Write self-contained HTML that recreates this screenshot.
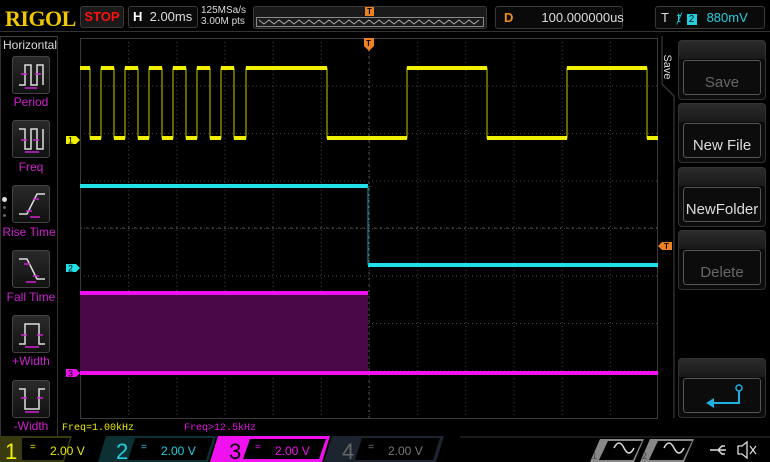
<!DOCTYPE html>
<html><head><meta charset="utf-8"><style>
*{margin:0;padding:0;box-sizing:border-box}
body{width:770px;height:462px;background:#000;position:relative;overflow:hidden;font-family:"Liberation Sans",sans-serif}
.a{position:absolute}
.box{position:absolute;border:1px solid #3a3a3a;border-radius:3px;background:#0a0a0a}
.lb{position:absolute;width:62px;left:0;text-align:center;color:#d020d0;font-size:12px}
.ib{position:absolute;left:12px;width:38px;height:38px;border:1px solid #444;border-radius:3px;background:linear-gradient(#2a2a2a,#111)}
.rb{position:absolute;left:678px;width:88px;height:60px;border:1px solid #333;border-radius:4px;background:linear-gradient(#2c2c2c 0,#1a1a1a 18px,#0c0c0c 18px)}
.rb div{position:absolute;left:4px;right:4px;top:19px;bottom:4px;border:1px solid #555;border-radius:3px;color:#ddd;font-size:15px;text-align:center;line-height:44px}
</style></head><body>
<div class="a" style="left:5px;top:6px;font-family:'Liberation Serif',serif;font-weight:bold;font-size:22px;color:#f0c800;letter-spacing:-0.5px">RIGOL</div>
<div class="box" style="left:80px;top:6px;width:44px;height:22px;background:#1a1a1a;color:#ff1010;font-weight:bold;font-size:13px;text-align:center;line-height:20px">STOP</div>
<div class="box" style="left:128px;top:6px;width:70px;height:22px;color:#ddd;font-size:13px;line-height:20px;padding-left:4px"><b style="color:#fff">H</b>&nbsp; 2.00ms</div>
<div class="a" style="left:201px;top:5px;color:#ddd;font-size:10px;line-height:11px">125MSa/s<br>3.00M pts</div>
<div class="box" style="left:253px;top:6px;width:234px;height:23px;background:#1a1a1a"></div>
<svg class="a" style="left:256px;top:17px" width="228" height="10"><rect x="0.5" y="0.5" width="227" height="9" fill="none" stroke="#888"/><polyline fill="none" stroke="#aaa" points="3,3 8,7 13,3 18,7 23,3 28,7 33,3 38,7 43,3 48,7 53,3 58,7 63,3 68,7 73,3 78,7 83,3 88,7 93,3 98,7 103,3 108,7 113,3 118,7 123,3 128,7 133,3 138,7 143,3 148,7 153,3 158,7 163,3 168,7 173,3 178,7 183,3 188,7 193,3 198,7 203,3 208,7 213,3 218,7 223,3"/></svg>
<div class="a" style="left:365px;top:7px;width:9px;height:9px;background:#f08020;color:#000;font-size:8px;font-weight:bold;text-align:center;line-height:9px">T</div>
<div class="box" style="left:495px;top:6px;width:128px;height:23px;color:#ddd;font-size:13px;line-height:21px"><b style="color:#f09010;margin-left:8px">D</b><span style="margin-left:28px">100.000000us</span></div>
<div class="box" style="left:655px;top:6px;width:110px;height:23px;color:#ddd;font-size:13px;line-height:21px"><span style="margin-left:5px">T</span><span style="color:#20d0e0;margin-left:8px">ⱦ</span><span style="display:inline-block;background:#20d0e0;color:#000;font-size:10px;width:10px;height:11px;line-height:11px;text-align:center;margin-left:6px">2</span><span style="color:#20d0e0;margin-left:10px">880mV</span></div>
<div class="a" style="left:0;top:31px;width:770px;height:1px;background:#333"></div>

<div class="a" style="left:0;top:36px;width:58px;height:426px;border:1px solid #333;border-top-color:#444"></div>
<div class="a" style="left:3px;top:38px;color:#ddd;font-size:12px">Horizontal</div>
<div class="ib" style="top:56px"><svg width="38" height="38"><polyline fill="none" stroke="#ddd" stroke-width="1.5" points="6,28 12,28 12,8 18,8 18,28 24,28 24,8 30,8 30,28"/><path d="M8,17h6M22,17h6M12,31h12" stroke="#d020d0" stroke-width="1.5"/></svg></div>
<div class="lb" style="top:95px">Period</div>
<div class="ib" style="top:120px"><svg width="38" height="38"><polyline fill="none" stroke="#ddd" stroke-width="1.5" points="6,8 12,8 12,28 18,28 18,8 24,8 24,28 30,28 30,8"/><path d="M8,19h6M20,19h6M12,31h14" stroke="#d020d0" stroke-width="1.5"/></svg></div>
<div class="lb" style="top:160px">Freq</div>
<div class="a" style="left:2px;top:197px;width:5px;height:5px;border-radius:3px;background:#ddd"></div>
<div class="a" style="left:3px;top:206px;width:3px;height:3px;border-radius:2px;background:#666"></div>
<div class="a" style="left:3px;top:214px;width:3px;height:3px;border-radius:2px;background:#666"></div>
<div class="ib" style="top:185px"><svg width="38" height="38"><polyline fill="none" stroke="#ddd" stroke-width="1.5" points="6,28 14,28 24,8 32,8"/><path d="M13,25h6M20,13h6M17,31h10" stroke="#d020d0" stroke-width="1.5"/></svg></div>
<div class="lb" style="top:225px;left:-2px;font-size:12px">Rise Time</div>
<div class="ib" style="top:250px"><svg width="38" height="38"><polyline fill="none" stroke="#ddd" stroke-width="1.5" points="6,8 14,8 24,28 32,28"/><path d="M11,13h6M20,25h6M13,31h10" stroke="#d020d0" stroke-width="1.5"/></svg></div>
<div class="lb" style="top:290px">Fall Time</div>
<div class="ib" style="top:315px"><svg width="38" height="38"><polyline fill="none" stroke="#ddd" stroke-width="1.5" points="6,28 12,28 12,8 26,8 26,28 32,28"/><path d="M8,19h6M24,19h6M12,31h14" stroke="#d020d0" stroke-width="1.5"/></svg></div>
<div class="lb" style="top:354px">+Width</div>
<div class="ib" style="top:380px"><svg width="38" height="38"><polyline fill="none" stroke="#ddd" stroke-width="1.5" points="6,8 12,8 12,28 26,28 26,8 32,8"/><path d="M8,17h6M24,17h6M12,31h14" stroke="#d020d0" stroke-width="1.5"/></svg></div>
<div class="lb" style="top:419px">-Width</div>

<svg class="a" style="left:0;top:0" width="770" height="462">
<defs><pattern id="v" width="48.17" height="380" x="80" y="38" patternUnits="userSpaceOnUse"><line x1="0.5" y1="0" x2="0.5" y2="380" stroke="#444" stroke-dasharray="1,3"/></pattern>
<pattern id="h" width="578" height="47.5" x="80" y="38" patternUnits="userSpaceOnUse"><line x1="0" y1="0.5" x2="578" y2="0.5" stroke="#444" stroke-dasharray="1,3"/></pattern></defs>
<rect x="80" y="38" width="578" height="380" fill="url(#v)"/>
<rect x="80" y="38" width="578" height="380" fill="url(#h)"/>
<line x1="80" y1="228" x2="658" y2="228" stroke="#555" stroke-dasharray="2,4"/>
<line x1="369" y1="38" x2="369" y2="418" stroke="#555" stroke-dasharray="2,4"/>
<rect x="80.5" y="38.5" width="577" height="380" fill="none" stroke="#3a3a3a"/>
<polyline fill="none" stroke="#c8c800" stroke-width="1" points="80,68 90,68 90,138 101,138 101,68 114,68 114,138 125,138 125,68 138,68 138,138 149,138 149,68 162,68 162,138 173,138 173,68 186,68 186,138 197,138 197,68 210,68 210,138 221,138 221,68 234,68 234,138 246,138 246,68 327,68 327,138 407,138 407,68 487,68 487,138 567,138 567,68 647,68 647,138 658,138"/>
<path d="M80,68h10M101,68h13M125,68h13M149,68h13M173,68h13M197,68h13M221,68h13M246,68h81M407,68h80M567,68h80M90,138h11M114,138h11M138,138h11M162,138h11M186,138h11M210,138h11M234,138h12M327,138h80M487,138h80M647,138h11" stroke="#f0f000" stroke-width="4"/>
<path d="M80,186h288M368,265h290" stroke="#20e0e8" stroke-width="4"/>
<line x1="368" y1="186" x2="368" y2="265" stroke="#20a0a8"/>
<rect x="80" y="293" width="288" height="80" fill="#4a0848"/>
<path d="M80,293h288M80,373h578" stroke="#f010f0" stroke-width="4"/>
<path d="M66,136h10l4,4l-4,4h-10z" fill="#f0f000"/><text x="68" y="143.5" font-size="9" font-family="Liberation Sans" fill="#000">1</text>
<path d="M66,264h10l4,4l-4,4h-10z" fill="#20e0e8"/><text x="68" y="271.5" font-size="9" font-family="Liberation Sans" fill="#000">2</text>
<path d="M66,369h10l4,4l-4,4h-10z" fill="#f010f0"/><text x="68" y="376.5" font-size="9" font-family="Liberation Sans" fill="#000">3</text>
<path d="M364,38h10v8l-5,5l-5,-5z" fill="#f08020"/><text x="366" y="46" font-size="8" font-weight="bold" font-family="Liberation Sans" fill="#000">T</text>
<path d="M658,246l4,-4h10v8h-10z" fill="#f08020"/><text x="664" y="249" font-size="8" font-weight="bold" font-family="Liberation Sans" fill="#000">T</text>
<path d="M662,36v48l12,12v322" fill="none" stroke="#444"/>
<text x="662" y="67" transform="rotate(90 662 67)" font-size="11" font-family="Liberation Sans" fill="#ddd" text-anchor="middle" dy="-2">Save</text>
<text x="62" y="430" font-size="10" font-family="Liberation Mono" fill="#e8e800">Freq=1.00kHz</text>
<text x="184" y="430" font-size="10" font-family="Liberation Mono" fill="#e010e0">Freq&gt;12.5kHz</text>
</svg>

<div class="rb" style="top:40px"><div style="color:#666">Save</div></div>
<div class="rb" style="top:103px"><div>New File</div></div>
<div class="rb" style="top:167px"><div>NewFolder</div></div>
<div class="rb" style="top:230px"><div style="color:#666">Delete</div></div>
<div class="rb" style="top:358px"><div><svg width="78" height="36"><path d="M55,12v12h-26" fill="none" stroke="#20b0e0" stroke-width="2"/><circle cx="55" cy="9" r="3" fill="none" stroke="#20b0e0" stroke-width="1.5"/><path d="M22,24l8,-5v10z" fill="#20b0e0"/></svg></div></div>

<svg class="a" style="left:0;top:436px" width="770" height="26">
<path d="M0,0h72l-8,26h-64z" fill="#3a3a10"/><path d="M22,2h48l-7,22h-41z" fill="#000"/>
<path d="M106,0h110l-8,26h-110z" fill="#0c3034"/><path d="M135,2h78l-7,22h-78z" fill="#000"/>
<path d="M218,0h112l-8,26h-112z" fill="#f010f0"/><path d="M250,3h76l-7,20h-76z" fill="#000"/>
<path d="M332,0h112l-8,26h-112z" fill="#1c2430"/><path d="M362,2h78l-7,22h-78z" fill="#000"/>
<text x="5" y="23" font-size="22" font-family="Liberation Sans" fill="#f0f000">1</text>
<text x="30" y="14" font-size="10" fill="#e8e800" font-family="Liberation Sans">=</text>
<text x="50" y="19" font-size="12" fill="#e8e800" font-family="Liberation Sans">2.00 V</text>
<text x="116" y="23" font-size="22" font-family="Liberation Sans" fill="#20d0e0">2</text>
<text x="141" y="14" font-size="10" fill="#20d0e0" font-family="Liberation Sans">=</text>
<text x="161" y="19" font-size="12" fill="#20d0e0" font-family="Liberation Sans">2.00 V</text>
<text x="229" y="23" font-size="22" font-family="Liberation Sans" fill="#000">3</text>
<text x="255" y="14" font-size="10" fill="#f010f0" font-family="Liberation Sans">=</text>
<text x="275" y="19" font-size="12" fill="#f010f0" font-family="Liberation Sans">2.00 V</text>
<text x="342" y="23" font-size="22" font-family="Liberation Sans" fill="#666">4</text>
<text x="368" y="14" font-size="10" fill="#777" font-family="Liberation Sans">=</text>
<text x="388" y="19" font-size="12" fill="#777" font-family="Liberation Sans">2.00 V</text>
<line x1="460" y1="1" x2="770" y2="1" stroke="#333"/>
<path d="M600,3h44l-10,23h-44z" fill="#888"/><path d="M608,5h34l-9,19h-34z" fill="#000"/>
<path d="M650,3h44l-10,23h-44z" fill="#888"/><path d="M658,5h34l-9,19h-34z" fill="#000"/>
<text x="592" y="23" font-size="9" fill="#444" font-family="Liberation Sans">1</text>
<text x="642" y="23" font-size="9" fill="#444" font-family="Liberation Sans">2</text>
<path d="M614,12q5,-10 10,0t10,0" fill="none" stroke="#ddd" stroke-width="1.5"/>
<path d="M664,12q5,-10 10,0t10,0" fill="none" stroke="#ddd" stroke-width="1.5"/>
<path d="M710,14h16M713,14l-3,0M718,14l4,-4h3M718,14l4,4h3" fill="none" stroke="#ddd" stroke-width="1.5"/>
<path d="M738,10h4l5,-4v16l-5,-4h-4z" fill="none" stroke="#ddd" stroke-width="1.3"/>
<path d="M750,10l6,8M756,10l-6,8" stroke="#ddd" stroke-width="1.2"/>
</svg>
</body></html>
